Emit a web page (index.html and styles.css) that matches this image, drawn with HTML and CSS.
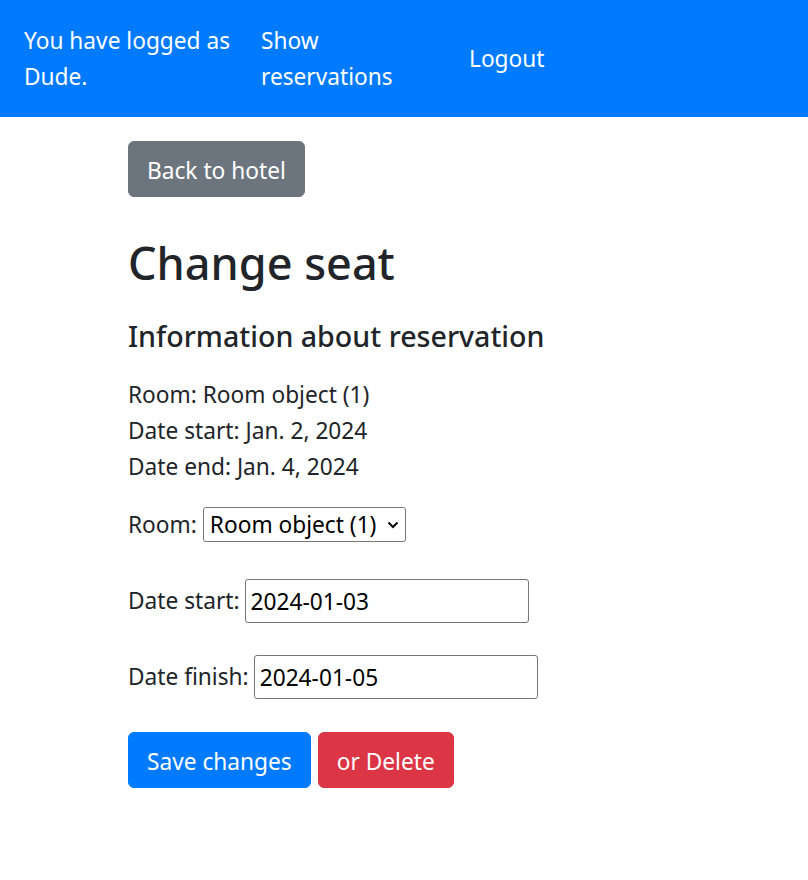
FILE: index.html
```html
<!DOCTYPE html>
<html lang="en">
<head>
<meta charset="utf-8">
<title>Change seat</title>
<link rel="stylesheet" href="styles.css">
</head>
<body>
<nav class="navbar">
  <span class="nav-item nav-user">You have logged as Dude.</span>
  <a class="nav-item nav-res" href="#">Show reservations</a>
  <a class="nav-item nav-logout" href="#">Logout</a>
</nav>
<main class="content">
  <a class="btn btn-secondary" href="#">Back to hotel</a>
  <h2 class="title">Change seat</h2>
  <h5 class="subtitle">Information about reservation</h5>
  <div class="info">
    <div>Room: Room object (1)</div>
    <div>Date start: Jan. 2, 2024</div>
    <div>Date end: Jan. 4, 2024</div>
  </div>
  <form class="form">
    <div class="row row-room">
      <label for="room">Room:</label>
      <span class="select-wrap">
        <select id="room" class="select"><option>Room object (1)</option></select>
        <svg class="chevron" viewBox="0 0 12 8" width="12" height="8"><path d="M1.5 1.5 L6 6 L10.5 1.5" fill="none" stroke="#000" stroke-width="2"/></svg>
      </span>
    </div>
    <div class="row row-start">
      <label for="ds">Date start:</label>
      <input id="ds" class="input" type="text" value="2024-01-03">
    </div>
    <div class="row row-finish">
      <label for="df">Date finish:</label>
      <input id="df" class="input" type="text" value="2024-01-05">
    </div>
    <div class="actions">
      <button type="button" class="btn btn-primary">Save changes</button>
      <button type="button" class="btn btn-danger">or Delete</button>
    </div>
  </form>
</main>
</body>
</html>
```
FILE: styles.css
```css
* { box-sizing: border-box; }
html, body { margin: 0; padding: 0; }
body {
  font-family: "Noto Sans", "Open Sans", sans-serif;
  font-size: 22.7px;
  line-height: 36px;
  color: #212529;
  background: #fff;
}
.navbar {
  background: #007bff;
  height: 117px;
  display: flex;
  align-items: center;
  padding: 0 24px;
}
.nav-item {
  color: #fff;
  text-decoration: none;
  line-height: 36px;
}
.nav-user { width: 222px; margin-right: 15px; }
.nav-res { width: 150px; margin-right: 58px; }
.content {
  padding: 24px 0 0 128px;
}
.btn {
  display: inline-block;
  font-family: inherit;
  font-size: 22.7px;
  line-height: 36px;
  padding: 11px 18px 7px;
  border: 1px solid transparent;
  border-radius: 6px;
  color: #fff;
  text-decoration: none;
  cursor: pointer;
}
.btn-secondary { background: #6c757d; border-color: #6c757d; }
.btn-primary { background: #007bff; border-color: #007bff; }
.btn-danger { background: #dc3545; border-color: #dc3545; }
.title {
  font-size: 45px;
  font-weight: 500;
  line-height: 58px;
  margin: 37px 0 0;
}
.subtitle {
  font-size: 28.6px;
  font-weight: 500;
  line-height: 36px;
  margin: 26px 0 0;
}
.info { margin-top: 23px; }
.form { display: flex; flex-direction: column; align-items: flex-start; }
.row { display: flex; align-items: center; gap: 5px; }
.row-room { margin-top: 22px; height: 36px; gap: 6px; }
.row-start { margin-top: 36px; }
.row-finish { margin-top: 32px; }
.select-wrap { position: relative; display: inline-block; }
.select {
  appearance: none;
  -webkit-appearance: none;
  font-family: inherit;
  font-size: 22.7px;
  line-height: 31px;
  height: 35px;
  width: 203px;
  padding: 0 26px 0 6px;
  border: 1px solid #767676;
  border-radius: 3px;
  background: #fff;
  color: #000;
}
.chevron { position: absolute; right: 7px; top: 14px; pointer-events: none; }
.input {
  font-family: inherit;
  font-size: 22.7px;
  height: 44px;
  width: 284px;
  padding: 0 5px;
  border: 1px solid #767676;
  border-radius: 3px;
  color: #000;
}
.actions { margin-top: 33px; display: flex; gap: 7px; }
```
